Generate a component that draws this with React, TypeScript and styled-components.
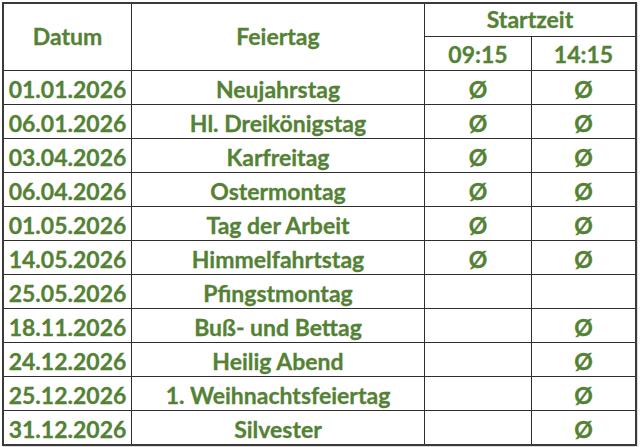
import React from "react";
import styled, { createGlobalStyle } from "styled-components";

const Global = createGlobalStyle`
  html, body { margin: 0; padding: 0; background: #ffffff; }
  body { width: 640px; height: 447px; overflow: hidden; }
`;

const Page = styled.div`
  padding: 2px 0 0 2px;
`;

const Grid = styled.div`
  display: grid;
  grid-template-columns: 127px 292px 106px 103px;
  grid-template-rows: 32px 33px repeat(11, 33px);
  gap: 1px;
  width: max-content;
  background: #2e2e2e;
  border: 2px solid #3a3a3a;
  box-shadow: 1px 1px 0 #dcdcdc;
  font-family: Lato, "Open Sans", sans-serif;
  font-weight: 700;
  color: #548235;
`;

const Cell = styled.div<{ $col?: string; $row?: string; $pad?: number }>`
  background: #ffffff;
  display: flex;
  align-items: flex-end;
  justify-content: center;
  font-size: 23px;
  line-height: 1;
  padding-bottom: ${(p) => p.$pad ?? 3}px;
  box-sizing: border-box;
  white-space: nowrap;
  -webkit-text-stroke: 0.3px #548235;
  ${(p) => (p.$col ? `grid-column: ${p.$col};` : "")}
  ${(p) => (p.$row ? `grid-row: ${p.$row};` : "")}
`;

const Mark = styled.span`
  font-family: Lato, "Open Sans", sans-serif;
  font-weight: 700;
`;

const rows: [string, string, boolean, boolean][] = [
  ["01.01.2026", "Neujahrstag", true, true],
  ["06.01.2026", "Hl. Dreikönigstag", true, true],
  ["03.04.2026", "Karfreitag", true, true],
  ["06.04.2026", "Ostermontag", true, true],
  ["01.05.2026", "Tag der Arbeit", true, true],
  ["14.05.2026", "Himmelfahrtstag", true, true],
  ["25.05.2026", "Pfingstmontag", false, false],
  ["18.11.2026", "Buß- und Bettag", false, true],
  ["24.12.2026", "Heilig Abend", false, true],
  ["25.12.2026", "1. Weihnachtsfeiertag", false, true],
  ["31.12.2026", "Silvester", false, true],
];

export default function App() {
  return (
    <>
      <Global />
      <Page>
        <Grid>
          <Cell $col="1" $row="1 / span 2" $pad={22}>Datum</Cell>
          <Cell $col="2" $row="1 / span 2" $pad={22}>Feiertag</Cell>
          <Cell $col="3 / span 2" $row="1" $pad={5}>Startzeit</Cell>
          <Cell $col="3" $row="2" $pad={4}>09:15</Cell>
          <Cell $col="4" $row="2" $pad={4}>14:15</Cell>
          {rows.map(([d, n, a, b]) => (
            <React.Fragment key={d}>
              <Cell>{d}</Cell>
              <Cell>{n}</Cell>
              <Cell>{a ? <Mark>Ø</Mark> : null}</Cell>
              <Cell>{b ? <Mark>Ø</Mark> : null}</Cell>
            </React.Fragment>
          ))}
        </Grid>
      </Page>
    </>
  );
}
